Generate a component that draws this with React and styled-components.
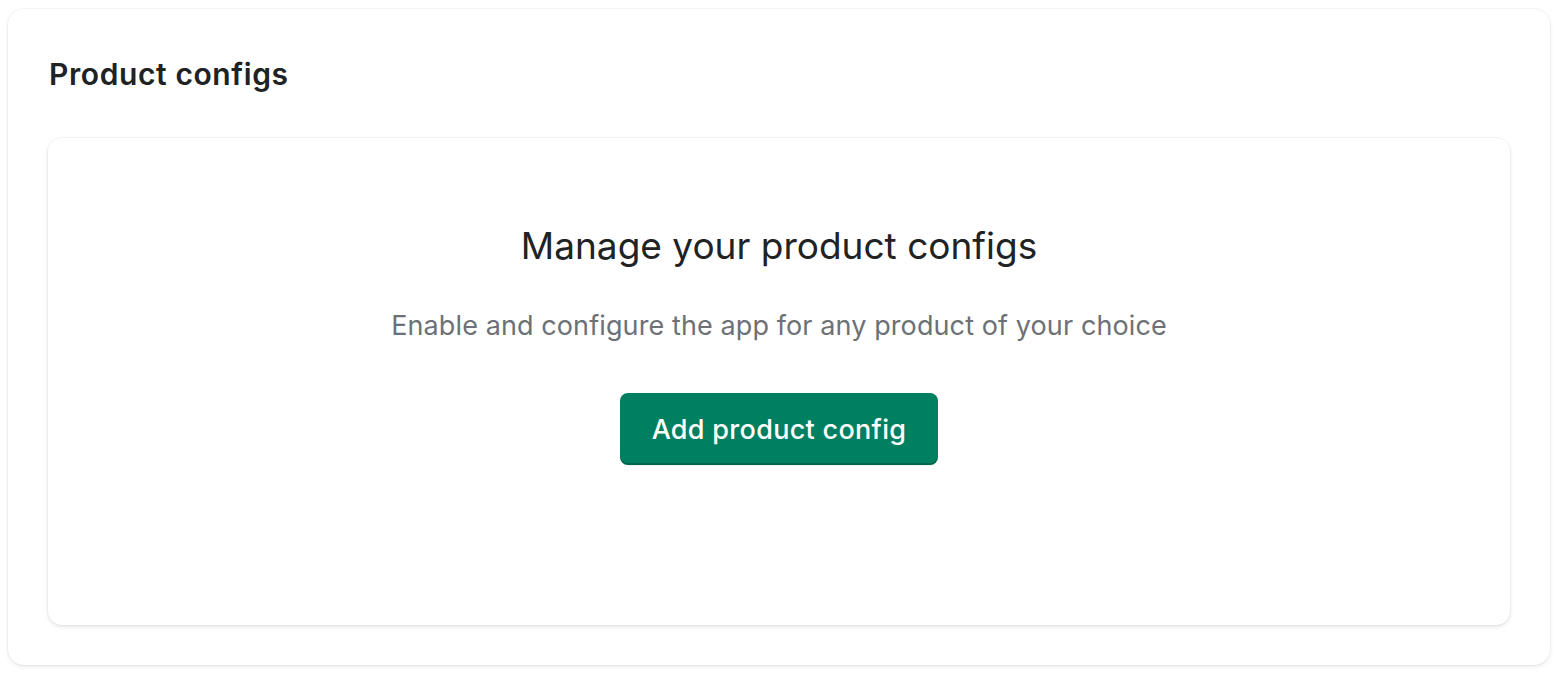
import styled, { createGlobalStyle } from 'styled-components';

const GlobalStyle = createGlobalStyle`
  body {
    margin: 0;
    background: #ffffff;
    font-family: Inter, "Noto Sans", "Liberation Sans", sans-serif;
    color: #202223;
  }
`;

const SPage = styled.div`
  padding: 9px 10px 9px 8px;
`;

const SCard = styled.section`
  background: #ffffff;
  border-radius: 16px;
  padding: 45px 40px 40px;
  box-shadow: 0 0 0 1px rgba(0, 0, 0, 0.035), 0 2px 4px rgba(0, 0, 0, 0.08);
`;

const SCardTitle = styled.h2`
  margin: 0 0 44px 1px;
  font-size: 30px;
  line-height: 40px;
  font-weight: 600;
  color: #202223;
  letter-spacing: 0.6px;
`;

const SEmptyState = styled.div`
  display: flex;
  flex-direction: column;
  align-items: center;
  background: #ffffff;
  border-radius: 14px;
  padding: 84px 40px 160px;
  box-shadow: 0 0 0 1px rgba(0, 0, 0, 0.035), 0 2px 4px rgba(0, 0, 0, 0.1);
`;

const SEmptyTitle = styled.h3`
  margin: 0;
  font-size: 37px;
  line-height: 48px;
  font-weight: 400;
  color: #202223;
`;

const SEmptyText = styled.p`
  margin: 38px 0 49px;
  font-size: 27px;
  line-height: 36px;
  letter-spacing: 0.1px;
  color: #6d7175;
`;

const SPrimaryButton = styled.button`
  height: 72px;
  padding: 0 32px;
  border: none;
  border-radius: 8px;
  background: #008060;
  color: #ffffff;
  font-family: inherit;
  font-size: 27px;
  font-weight: 500;
  letter-spacing: 0.3px;
  cursor: pointer;
  box-shadow: inset 0 -2px 0 rgba(0, 0, 0, 0.2), 0 1px 0 rgba(0, 0, 0, 0.05);
  &:hover {
    background: #006e52;
  }
`;

export default function App() {
  return (
    <>
      <GlobalStyle />
      <SPage>
        <SCard>
          <SCardTitle>Product configs</SCardTitle>
          <SEmptyState>
            <SEmptyTitle>Manage your product configs</SEmptyTitle>
            <SEmptyText>Enable and configure the app for any product of your choice</SEmptyText>
            <SPrimaryButton type="button">Add product config</SPrimaryButton>
          </SEmptyState>
        </SCard>
      </SPage>
    </>
  );
}
